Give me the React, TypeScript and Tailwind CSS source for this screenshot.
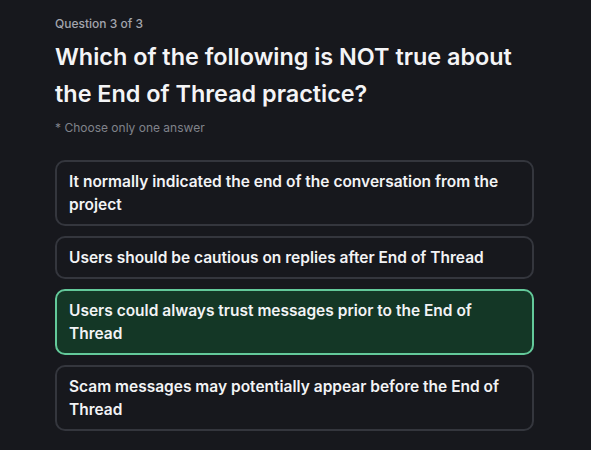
import React from "react";

const options = [
  { text: "It normally indicated the end of the conversation from the project", selected: false },
  { text: "Users should be cautious on replies after End of Thread", selected: false },
  { text: "Users could always trust messages prior to the End of Thread", selected: true },
  { text: "Scam messages may potentially appear before the End of Thread", selected: false },
];

export default function App() {
  return (
    <div
      className="w-[591px] h-[450px] bg-[#17181d] overflow-hidden"
      style={{ fontFamily: "Inter, 'Noto Sans', sans-serif" }}
    >
      <div className="pl-[55px] pr-[57px] pt-[16px]">
        <div className="text-[12px] leading-[16px] font-medium text-[#a3a5ad]">Question 3 of 3</div>
        <h1 className="mt-[6px] text-[23.4px] leading-[37px] font-semibold text-[#f4f4f6]">
          Which of the following is NOT true about the End of Thread practice?
        </h1>
        <div className="mt-[8px] text-[12px] leading-[16px] text-[#80838b]">* Choose only one answer</div>
        <div className="mt-[24px] flex flex-col gap-[10px]">
          {options.map((o, i) => (
            <div
              key={i}
              className={
                o.selected
                  ? "rounded-[10px] border-2 border-[#63c99a] bg-[#143726] px-[12px] py-[8px] text-[15.5px] leading-[23px] font-semibold text-[#f2f3f5]"
                  : "rounded-[10px] border-2 border-[#34363d] bg-[#17181d] px-[12px] py-[8px] text-[15.5px] leading-[23px] font-semibold text-[#f2f3f5]"
              }
            >
              {o.text}
            </div>
          ))}
        </div>
      </div>
    </div>
  );
}
